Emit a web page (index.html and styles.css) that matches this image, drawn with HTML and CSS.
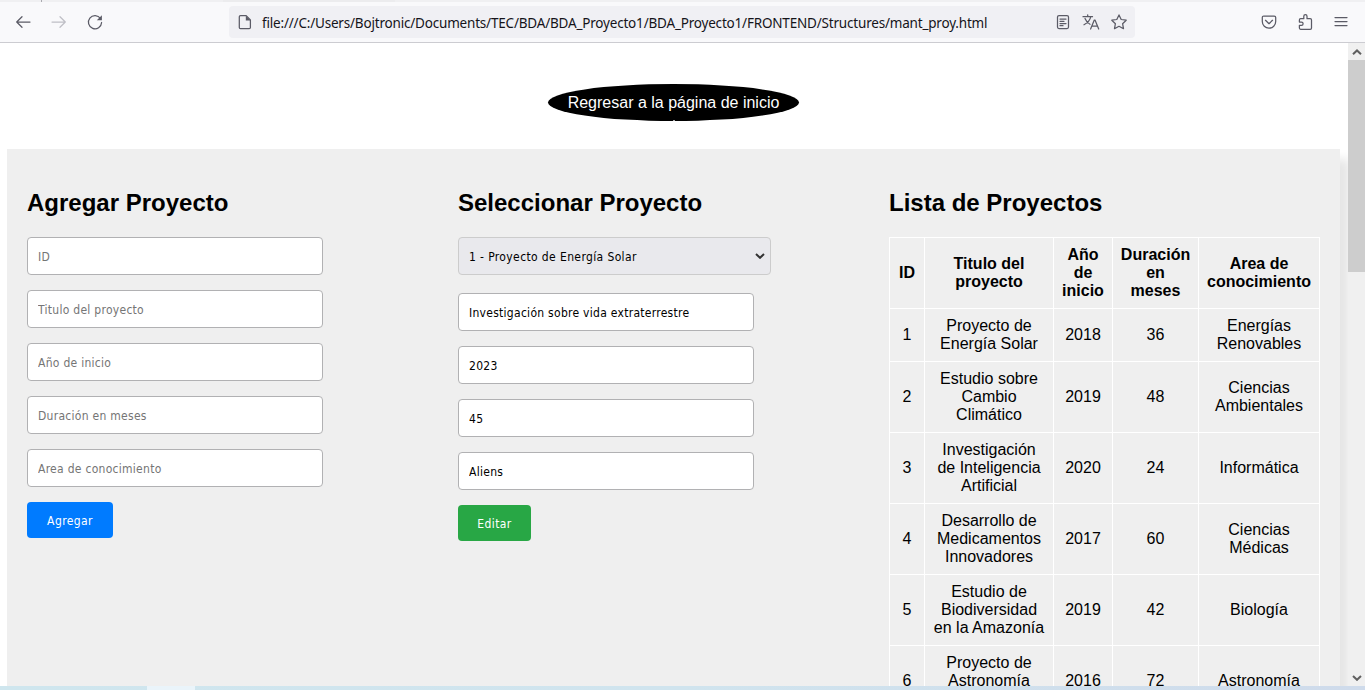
FILE: index.html
```html
<!DOCTYPE html>
<html lang="es">
<head>
<meta charset="utf-8">
<title>Mantenimiento de proyectos</title>
<link rel="stylesheet" href="styles.css">
</head>
<body>
<div class="tabstrip"><span class="tab-edge"></span><span class="tab-shade"></span></div>
<header class="toolbar">
  <nav class="nav-buttons">
    <svg class="icon" viewBox="0 0 16 16"><path d="M15 8H1.700M7 2.700 1.700 8l5.300 5.300"/></svg>
    <svg class="icon icon-disabled" viewBox="0 0 16 16"><path d="M1 8h13.300M9 2.700 14.300 8 9 13.300"/></svg>
    <svg class="icon" viewBox="0 0 16 16"><path d="M13.500 4.500A6.600 6.600 0 1 0 14.600 8.500"/><path class="solid" d="M14.900 1.200v5.100H9.800z"/></svg>
  </nav>
  <div class="urlbar">
    <svg class="icon icon-doc" viewBox="0 0 16 16"><path d="M3.500 1.600h5.700L13.400 6v7.400q0 1.200-1.200 1.200H3.500q-1.200 0-1.200-1.200V2.800q0-1.200 1.200-1.200z"/><path class="solid" d="M8.800 1.500v5h4.700z"/></svg>
    <span class="url">file:///C:/Users/Bojtronic/Documents/TEC/BDA/BDA_Proyecto1/BDA_Proyecto1/FRONTEND/Structures/mant_proy.html</span>
    <div class="url-actions">
      <svg class="icon" viewBox="0 0 16 16"><rect x="2.500" y="1.600" width="11" height="13" rx="1.500"/><path d="M5 5h6M5 7.300h4M5 9.600h6M5 11.700h3"/></svg>
      <svg class="icon" viewBox="0 0 16 16"><path d="M0 2.700h9.500M4.700.8v1.900M7.800 2.700C7 6.500 4.500 9 1 10.800M2 4.500c1 2.500 2.500 4.500 5 5.800M7.600 15l3.700-9h.7l3.700 9M9 12h5.500"/></svg>
      <svg class="icon" viewBox="0 0 16 16"><path d="M8 .9l2.200 4.600 5 .7-3.600 3.500.9 5L8 12.300l-4.500 2.400.9-5L.8 6.200l5-.7z"/></svg>
    </div>
  </div>
  <div class="menu-buttons">
    <svg class="icon" viewBox="0 0 16 16"><path d="M2.800 2h10.400q1.500 0 1.500 1.500v4a6.700 6.700 0 0 1-13.400 0v-4Q1.300 2 2.800 2zM4.500 6.300 8 9.700l3.500-3.400"/></svg>
    <svg class="icon" viewBox="0 0 16 16"><path d="M3.600 4.700h3.200V2.300a1.600 1.600 0 0 1 3.200 0v2.400h3.200q1.300 0 1.300 1.300v8q0 1.300-1.300 1.300H3.600q-1.200 0-1.200-1.200v-2.800h2.100a1.600 1.600 0 0 0 0-3.200H2.400V5.900q0-1.200 1.200-1.200z"/></svg>
    <svg class="icon" viewBox="0 0 16 16"><path d="M2 3.500h12M2 7.500h12M2 11.500h12"/></svg>
  </div>
</header>
<div class="viewport">
  <main class="page">
    <div class="top"><a class="home-link">Regresar a la página de inicio</a></div>
    <div class="panel">
      <section class="column">
        <h2>Agregar Proyecto</h2>
        <form>
          <input class="field" placeholder="ID">
          <input class="field" placeholder="Titulo del proyecto">
          <input class="field" placeholder="Año de inicio">
          <input class="field" placeholder="Duración en meses">
          <input class="field" placeholder="Area de conocimiento">
          <button class="btn btn-add" type="button">Agregar</button>
        </form>
      </section>
      <section class="column">
        <h2>Seleccionar Proyecto</h2>
        <form>
          <div class="select"><span>1 - Proyecto de Energía Solar</span><svg class="chevron" viewBox="0 0 10 6"><path d="M1 1l4 3.800L9 1"/></svg></div>
          <input class="field" value="Investigación sobre vida extraterrestre">
          <input class="field" value="2023">
          <input class="field" value="45">
          <input class="field" value="Aliens">
          <button class="btn btn-edit" type="button">Editar</button>
        </form>
      </section>
      <section class="column">
        <h2>Lista de Proyectos</h2>
        <table>
          <colgroup><col class="c-id"><col class="c-title"><col class="c-year"><col class="c-months"><col class="c-area"></colgroup>
          <tr><th>ID</th><th>Titulo del<br>proyecto</th><th>Año<br>de<br>inicio</th><th>Duración<br>en<br>meses</th><th>Area de<br>conocimiento</th></tr>
          <tr><td>1</td><td>Proyecto de<br>Energía Solar</td><td>2018</td><td>36</td><td>Energías<br>Renovables</td></tr>
          <tr><td>2</td><td>Estudio sobre<br>Cambio<br>Climático</td><td>2019</td><td>48</td><td>Ciencias<br>Ambientales</td></tr>
          <tr><td>3</td><td>Investigación<br>de Inteligencia<br>Artificial</td><td>2020</td><td>24</td><td>Informática</td></tr>
          <tr><td>4</td><td>Desarrollo de<br>Medicamentos<br>Innovadores</td><td>2017</td><td>60</td><td>Ciencias<br>Médicas</td></tr>
          <tr><td>5</td><td>Estudio de<br>Biodiversidad<br>en la Amazonía</td><td>2019</td><td>42</td><td>Biología</td></tr>
          <tr><td>6</td><td>Proyecto de<br>Astronomía<br>&nbsp;</td><td>2016</td><td>72</td><td>Astronomía</td></tr>
        </table>
      </section>
    </div>
  </main>
  <aside class="scrollbar">
    <div class="arrow"><svg class="chevron" viewBox="0 0 10 6"><path d="M1 5.200l4-3.800 4 3.800"/></svg></div>
    <div class="thumb"></div>
    <div class="arrow arrow-down"><svg class="chevron" viewBox="0 0 10 6"><path d="M1 1l4 3.800L9 1"/></svg></div>
  </aside>
</div>
<footer class="taskbar"><span class="task-active"></span></footer>
</body>
</html>
```
FILE: styles.css
```css
* { box-sizing: border-box; }
body {
  margin: 0;
  width: 1365px;
  height: 690px;
  overflow: hidden;
  display: flex;
  flex-direction: column;
  background: #fff;
  font: 16px/18px "Liberation Sans", Arial, sans-serif;
  color: #000;
}
.tabstrip { display: flex; height: 2px; flex: none; background: #f0f0f2; }
.tab-edge { width: 1px; margin-left: 41px; background: #aaaab0; }
.tab-shade { width: 172px; margin-left: 181px; background: #ececee; }
.toolbar {
  display: flex;
  align-items: center;
  flex: none;
  height: 41px;
  background: #f9f9fb;
  border-bottom: 1px solid #ccccd1;
}
.icon { width: 16px; height: 16px; flex: none; fill: none; stroke: #5b5b66; stroke-width: 1.25; stroke-linecap: round; stroke-linejoin: round; overflow: visible; }
.icon .solid { fill: #5b5b66; stroke: none; }
.icon-disabled { stroke: #bfbfc6; }
.nav-buttons { display: flex; gap: 20px; width: 229px; padding-left: 15px; }
.urlbar {
  display: flex;
  align-items: center;
  width: 906px;
  height: 32px;
  padding: 0 8px;
  border-radius: 4px;
  background: #f0f0f4;
}
.url { margin-left: 9px; padding-top: 2px; font: 13.5px/20px "Noto Sans", sans-serif; letter-spacing: -.19px; color: #15141a; white-space: nowrap; }
.url-actions { display: flex; gap: 12px; margin-left: auto; }
.menu-buttons { display: flex; gap: 20px; margin-left: 126px; }
.viewport { display: flex; height: 643px; flex: none; overflow: hidden; }
.page { width: 1348px; padding: 0 8px 0 7px; overflow: hidden; }
.top { display: flex; justify-content: center; height: 106px; padding-top: 41px; }
.home-link { position: relative; width: 251px; height: 37px; line-height: 37px; text-align: center; color: #fff; background: #000; border-radius: 50%; white-space: nowrap; }
.home-link::after { content: ""; position: absolute; left: 125px; bottom: 0; width: 2px; height: 1px; background: #aaa; }
.panel {
  display: flex;
  width: 1333px;
  height: 900px;
  padding: 20px;
  background: #efefef;
  box-shadow: 10px 10px 10px rgba(0, 0, 0, .1);
}
.column { flex: 1; min-width: 0; }
h2 { margin: 20px 0; font-size: 24px; line-height: 28px; }
form { display: flex; flex-direction: column; align-items: flex-start; }
.field, .select, .btn { font: 12px/16px "DejaVu Sans Condensed", "DejaVu Sans", sans-serif; font-stretch: condensed; letter-spacing: .28px; }
.field { width: 296px; height: 38px; margin: 0 0 15px; padding: 11px 10px 9px; border: 1px solid #b1b1b3; border-radius: 4px; background: #fff; color: #000; }
.field::placeholder { color: #757575; opacity: 1; }
.select { display: flex; align-items: center; justify-content: space-between; width: 313px; height: 38px; margin-bottom: 18px; padding: 0 5px 0 10px; border: 1px solid #ccc; border-radius: 4px; background: #e9e9ed; letter-spacing: .38px; }
.select span { padding-top: 2px; }
.chevron { width: 10px; height: 6px; fill: none; stroke: #333; stroke-width: 2; }
.btn { height: 36px; padding: 2px 0 0; border: 0; border-radius: 4px; color: #fff; letter-spacing: .4px; }
.btn-add { width: 86px; background: #007bff; }
.btn-edit { width: 73px; background: #28a745; }
table { width: 431px; table-layout: fixed; border-collapse: collapse; }
.c-id { width: 35px; }
.c-title { width: 129px; }
.c-year { width: 59px; }
.c-months { width: 86px; }
.c-area { width: 121px; }
th, td { padding: 8px 0; border: 1px solid #fff; text-align: center; vertical-align: middle; white-space: nowrap; }
.scrollbar { display: flex; flex-direction: column; width: 17px; background: #f0f0f0; }
.arrow { display: flex; align-items: center; justify-content: center; height: 17px; flex: none; }
.arrow .chevron { stroke: #606060; }
.arrow-down { margin-top: auto; }
.thumb { height: 212px; background: #cdcdcd; }
.taskbar { display: flex; height: 4px; flex: none; background: linear-gradient(90deg, #cfe6ee 0, #d0e4ee 50%, #cfdbeb 100%); }
.task-active { width: 48px; margin-left: 147px; background: #eaf4fa; }
```
